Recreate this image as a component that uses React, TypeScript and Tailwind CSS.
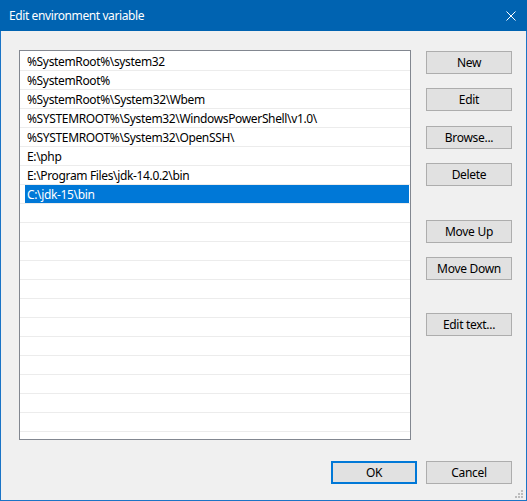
const paths = [
  "%SystemRoot%\\system32",
  "%SystemRoot%",
  "%SystemRoot%\\System32\\Wbem",
  "%SYSTEMROOT%\\System32\\WindowsPowerShell\\v1.0\\",
  "%SYSTEMROOT%\\System32\\OpenSSH\\",
  "E:\\php",
  "E:\\Program Files\\jdk-14.0.2\\bin",
  "C:\\jdk-15\\bin",
];

const selected = 7;
const rowCount = 21;

function Button({ label, className = "", primary = false }: { label: string; className?: string; primary?: boolean }) {
  return (
    <button
      className={
        "w-[86px] h-[23px] shrink-0 bg-[#e1e1e1] text-[12px] leading-none tracking-[-0.3px] text-black flex items-center justify-center " +
        (primary ? "border-2 border-[#0078d7] " : "border border-[#adadad] ") +
        className
      }
    >
      {label}
    </button>
  );
}

function CloseIcon() {
  return (
    <svg width="10" height="10" viewBox="0 0 10 10" className="block">
      <path d="M0.5 0.5 L9.5 9.5 M9.5 0.5 L0.5 9.5" stroke="white" strokeWidth="1" />
    </svg>
  );
}

function Grip() {
  const dots = [
    [6, 0],
    [3, 3],
    [6, 3],
    [0, 6],
    [3, 6],
    [6, 6],
  ];
  return (
    <svg width="8" height="8" viewBox="0 0 8 8" className="absolute right-[3px] bottom-[2px]">
      {dots.map(([x, y], i) => (
        <rect key={i} x={x} y={y} width="2" height="2" fill="#bcbcbc" />
      ))}
    </svg>
  );
}

export default function App() {
  return (
    <div
      className="w-[527px] h-[501px] flex flex-col bg-[#f0f0f0] border-x border-b border-[#1a74c6] relative"
      style={{ fontFamily: "'Segoe UI', 'Noto Sans', 'Liberation Sans', sans-serif" }}
    >
      {/* title bar */}
      <div className="h-[31px] -mx-px bg-[#0063b1] flex items-center justify-between pl-[9px] pr-[11px] pt-px shrink-0">
        <span className="text-white text-[12px] tracking-[-0.4px]">Edit environment variable</span>
        <CloseIcon />
      </div>

      <div className="flex-1 pl-[18px] pr-[14px] pt-[19px] flex flex-col">
        <div className="flex gap-[15px]">
          {/* path list */}
          <div className="w-[392px] h-[390px] border border-[#828790] bg-white pt-px overflow-hidden">
            {Array.from({ length: rowCount }).map((_, i) => (
              <div key={i} className="h-[19px] border-b border-[#ececec] pl-[5px] pr-px">
                <div
                  className={
                    "h-[18px] pl-[2px] text-[12px] leading-[20px] tracking-[-0.35px] whitespace-nowrap " +
                    (i === selected ? "bg-[#0078d7] text-white" : "text-black")
                  }
                >
                  {paths[i] ?? ""}
                </div>
              </div>
            ))}
          </div>

          {/* action buttons */}
          <div className="flex flex-col pt-px">
            <Button label="New" />
            <Button label="Edit" className="mt-[14px]" />
            <Button label="Browse..." className="mt-[15px]" />
            <Button label="Delete" className="mt-[14px]" />
            <Button label="Move Up" className="mt-[34px]" />
            <Button label="Move Down" className="mt-[14px]" />
            <Button label="Edit text..." className="mt-[33px]" />
          </div>
        </div>

        <div className="mt-[21px] flex justify-end gap-[9px]">
          <Button label="OK" primary />
          <Button label="Cancel" />
        </div>
      </div>

      <Grip />
    </div>
  );
}
